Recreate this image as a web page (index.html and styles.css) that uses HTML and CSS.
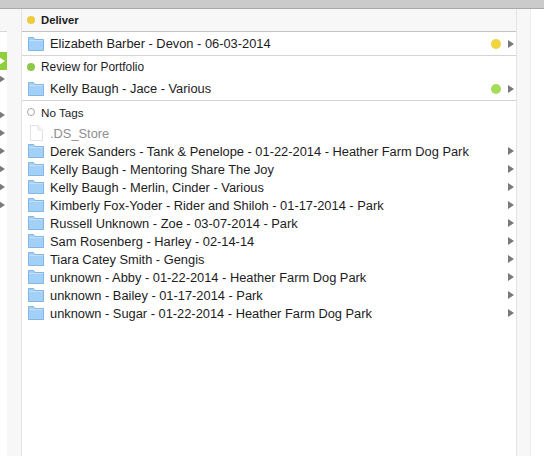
FILE: index.html
```html
<!DOCTYPE html>
<html lang="en">
<head>
    <meta charset="UTF-8">
    <title>Finder tags</title>
    <link rel="stylesheet" href="styles.css">
</head>
<body>
    <div class="titlebar"></div>
    <div class="window">
        <div class="far-left">
            <div class="far-left-head"></div>
            <ul class="far-left-list">
                <li class="far-left-row selected"><svg class="arrow" viewBox="0 0 6 8"><path d="M0 0L6 4L0 8Z"/></svg></li>
                <li class="far-left-row"><svg class="arrow" viewBox="0 0 6 8"><path d="M0 0L6 4L0 8Z"/></svg></li>
                <li class="far-left-row gap"><svg class="arrow" viewBox="0 0 6 8"><path d="M0 0L6 4L0 8Z"/></svg></li>
                <li class="far-left-row"><svg class="arrow" viewBox="0 0 6 8"><path d="M0 0L6 4L0 8Z"/></svg></li>
                <li class="far-left-row"><svg class="arrow" viewBox="0 0 6 8"><path d="M0 0L6 4L0 8Z"/></svg></li>
                <li class="far-left-row"><svg class="arrow" viewBox="0 0 6 8"><path d="M0 0L6 4L0 8Z"/></svg></li>
                <li class="far-left-row"><svg class="arrow" viewBox="0 0 6 8"><path d="M0 0L6 4L0 8Z"/></svg></li>
                <li class="far-left-row"><svg class="arrow" viewBox="0 0 6 8"><path d="M0 0L6 4L0 8Z"/></svg></li>
            </ul>
        </div>
        <div class="gutter"></div>
        <div class="main">
            <div class="tag-head first"><span class="dot yellow"></span><b>Deliver</b></div>
            <div class="row tagged first-tagged">
                <svg class="folder" viewBox="0 0 16 14"><use href="#folder-icon"/></svg>
                <span class="name">Elizabeth Barber - Devon - 06-03-2014</span>
                <span class="tag-dot yellow-big"></span>
                <svg class="arrow" viewBox="0 0 6 8"><path d="M0 0L6 4L0 8Z"/></svg>
            </div>
            <div class="tag-head review"><span class="dot green"></span>Review for Portfolio</div>
            <div class="row tagged second-tagged">
                <svg class="folder" viewBox="0 0 16 14"><use href="#folder-icon"/></svg>
                <span class="name">Kelly Baugh - Jace - Various</span>
                <span class="tag-dot green-big"></span>
                <svg class="arrow" viewBox="0 0 6 8"><path d="M0 0L6 4L0 8Z"/></svg>
            </div>
            <div class="tag-head no-tags"><span class="dot none"></span>No Tags</div>
            <div class="row">
                <svg class="file" viewBox="0 0 13 16"><path d="M.5 .5H8L12.500 5V15.500H.5Z" fill="#fff" stroke="#e2e2e2"/><path d="M8 .5V5H12.500" fill="#f6f6f6" stroke="#e2e2e2"/></svg>
                <span class="name hidden-file">.DS_Store</span>
            </div>
            <div class="row"><svg class="folder" viewBox="0 0 16 14"><use href="#folder-icon"/></svg><span class="name">Derek Sanders - Tank &amp; Penelope - 01-22-2014 - Heather Farm Dog Park</span><svg class="arrow" viewBox="0 0 6 8"><path d="M0 0L6 4L0 8Z"/></svg></div>
            <div class="row"><svg class="folder" viewBox="0 0 16 14"><use href="#folder-icon"/></svg><span class="name">Kelly Baugh - Mentoring Share The Joy</span><svg class="arrow" viewBox="0 0 6 8"><path d="M0 0L6 4L0 8Z"/></svg></div>
            <div class="row"><svg class="folder" viewBox="0 0 16 14"><use href="#folder-icon"/></svg><span class="name">Kelly Baugh - Merlin, Cinder - Various</span><svg class="arrow" viewBox="0 0 6 8"><path d="M0 0L6 4L0 8Z"/></svg></div>
            <div class="row"><svg class="folder" viewBox="0 0 16 14"><use href="#folder-icon"/></svg><span class="name">Kimberly Fox-Yoder - Rider and Shiloh - 01-17-2014 - Park</span><svg class="arrow" viewBox="0 0 6 8"><path d="M0 0L6 4L0 8Z"/></svg></div>
            <div class="row"><svg class="folder" viewBox="0 0 16 14"><use href="#folder-icon"/></svg><span class="name">Russell Unknown - Zoe - 03-07-2014 - Park</span><svg class="arrow" viewBox="0 0 6 8"><path d="M0 0L6 4L0 8Z"/></svg></div>
            <div class="row"><svg class="folder" viewBox="0 0 16 14"><use href="#folder-icon"/></svg><span class="name">Sam Rosenberg - Harley - 02-14-14</span><svg class="arrow" viewBox="0 0 6 8"><path d="M0 0L6 4L0 8Z"/></svg></div>
            <div class="row"><svg class="folder" viewBox="0 0 16 14"><use href="#folder-icon"/></svg><span class="name">Tiara Catey Smith - Gengis</span><svg class="arrow" viewBox="0 0 6 8"><path d="M0 0L6 4L0 8Z"/></svg></div>
            <div class="row"><svg class="folder" viewBox="0 0 16 14"><use href="#folder-icon"/></svg><span class="name">unknown - Abby - 01-22-2014 - Heather Farm Dog Park</span><svg class="arrow" viewBox="0 0 6 8"><path d="M0 0L6 4L0 8Z"/></svg></div>
            <div class="row"><svg class="folder" viewBox="0 0 16 14"><use href="#folder-icon"/></svg><span class="name">unknown - Bailey - 01-17-2014 - Park</span><svg class="arrow" viewBox="0 0 6 8"><path d="M0 0L6 4L0 8Z"/></svg></div>
            <div class="row"><svg class="folder" viewBox="0 0 16 14"><use href="#folder-icon"/></svg><span class="name">unknown - Sugar - 01-22-2014 - Heather Farm Dog Park</span><svg class="arrow" viewBox="0 0 6 8"><path d="M0 0L6 4L0 8Z"/></svg></div>
        </div>
        <div class="gutter right"></div>
        <div class="far-right"></div>
    </div>
    <svg class="defs" width="0" height="0">
        <symbol id="folder-icon" viewBox="0 0 16 14">
            <path d="M.5 13.500V.5H5.500L7 2.500H15.500V13.500Z" fill="#a3d0f7" stroke="#83b5e3"/>
            <path d="M1 3.500H15" stroke="#c3e0fa"/>
        </symbol>
    </svg>
</body>
</html>
```

FILE: styles.css
```css
* {
    box-sizing: border-box;
}

html, body {
    margin: 0;
    padding: 0;
    height: 456px;
    overflow: hidden;
    background: #fff;
    font-family: "Liberation Sans", Arial, sans-serif;
    color: #1c1c1c;
}

.titlebar {
    height: 9px;
    background: #cbcbcb;
    border-bottom: 1px solid #a9a9a9;
}

.window {
    display: flex;
    height: 447px;
}

.far-left {
    width: 7px;
    background: #fff;
}

.far-left-head {
    height: 23px;
    background: #f7f7f7;
    border-bottom: 1px solid #d6d6d6;
}

.far-left-list {
    list-style: none;
    margin: 0;
    padding: 20px 0 0;
}

.far-left-row {
    height: 18px;
    display: flex;
    align-items: center;
}

.far-left-row.selected {
    background: #8fcf3c;
}

.far-left-row.selected .arrow {
    fill: #fff;
}

.far-left-row.gap {
    margin-top: 18px;
}

.far-left-row .arrow {
    margin-left: -1px;
}

.gutter {
    width: 15px;
    background: #f7f7f7;
    border-right: 1px solid #e4e4e4;
}

.gutter.right {
    width: 14px;
    border-right: none;
    border-left: 1px solid #e4e4e4;
}

.far-right {
    flex: 1;
    border-left: 1px solid #eee;
}

.main {
    width: 494px;
    background: #fff;
}

.tag-head {
    height: 23px;
    display: flex;
    align-items: center;
    gap: 6px;
    padding-left: 5px;
    font-size: 11.7px;
}

.tag-head b {
    font-size: 11.3px;
}

.tag-head.first {
    background: #f7f7f7;
    border-bottom: 1px solid #c4c4c4;
}

.tag-head.review {
    height: 22px;
    padding-bottom: 1px;
    font-size: 11.9px;
}

.tag-head.no-tags {
    padding-bottom: 1px;
}

.dot {
    width: 8px;
    height: 8px;
    border-radius: 50%;
}

.dot.yellow {
    background: #edcb3e;
}

.dot.green {
    background: #8fc849;
}

.dot.none {
    border: 1px solid #a8a8a8;
}

.row {
    height: 18px;
    display: flex;
    align-items: center;
    padding-left: 6px;
    padding-right: 2px;
    font-size: 12.85px;
}

.row.tagged {
    height: 23px;
    border-bottom: 1px solid #d4d4d4;
}

.row.first-tagged {
    height: 24px;
}

.row.second-tagged {
    padding-bottom: 1px;
}

.folder {
    width: 16px;
    height: 14px;
    flex: none;
}

.file {
    width: 13px;
    height: 16px;
    flex: none;
    margin-left: 2px;
    margin-right: 1px;
}

.name {
    margin-left: 6px;
    flex: 1;
    white-space: nowrap;
}

.hidden-file {
    color: #8e8e8e;
}

.arrow {
    width: 6px;
    height: 8px;
    flex: none;
    fill: #7a7a7a;
}

.tag-dot {
    width: 10px;
    height: 10px;
    border-radius: 50%;
    margin-right: 7px;
}

.yellow-big {
    background: #f3d43f;
}

.green-big {
    background: #a5dc5a;
}

.defs {
    display: block;
}
```
